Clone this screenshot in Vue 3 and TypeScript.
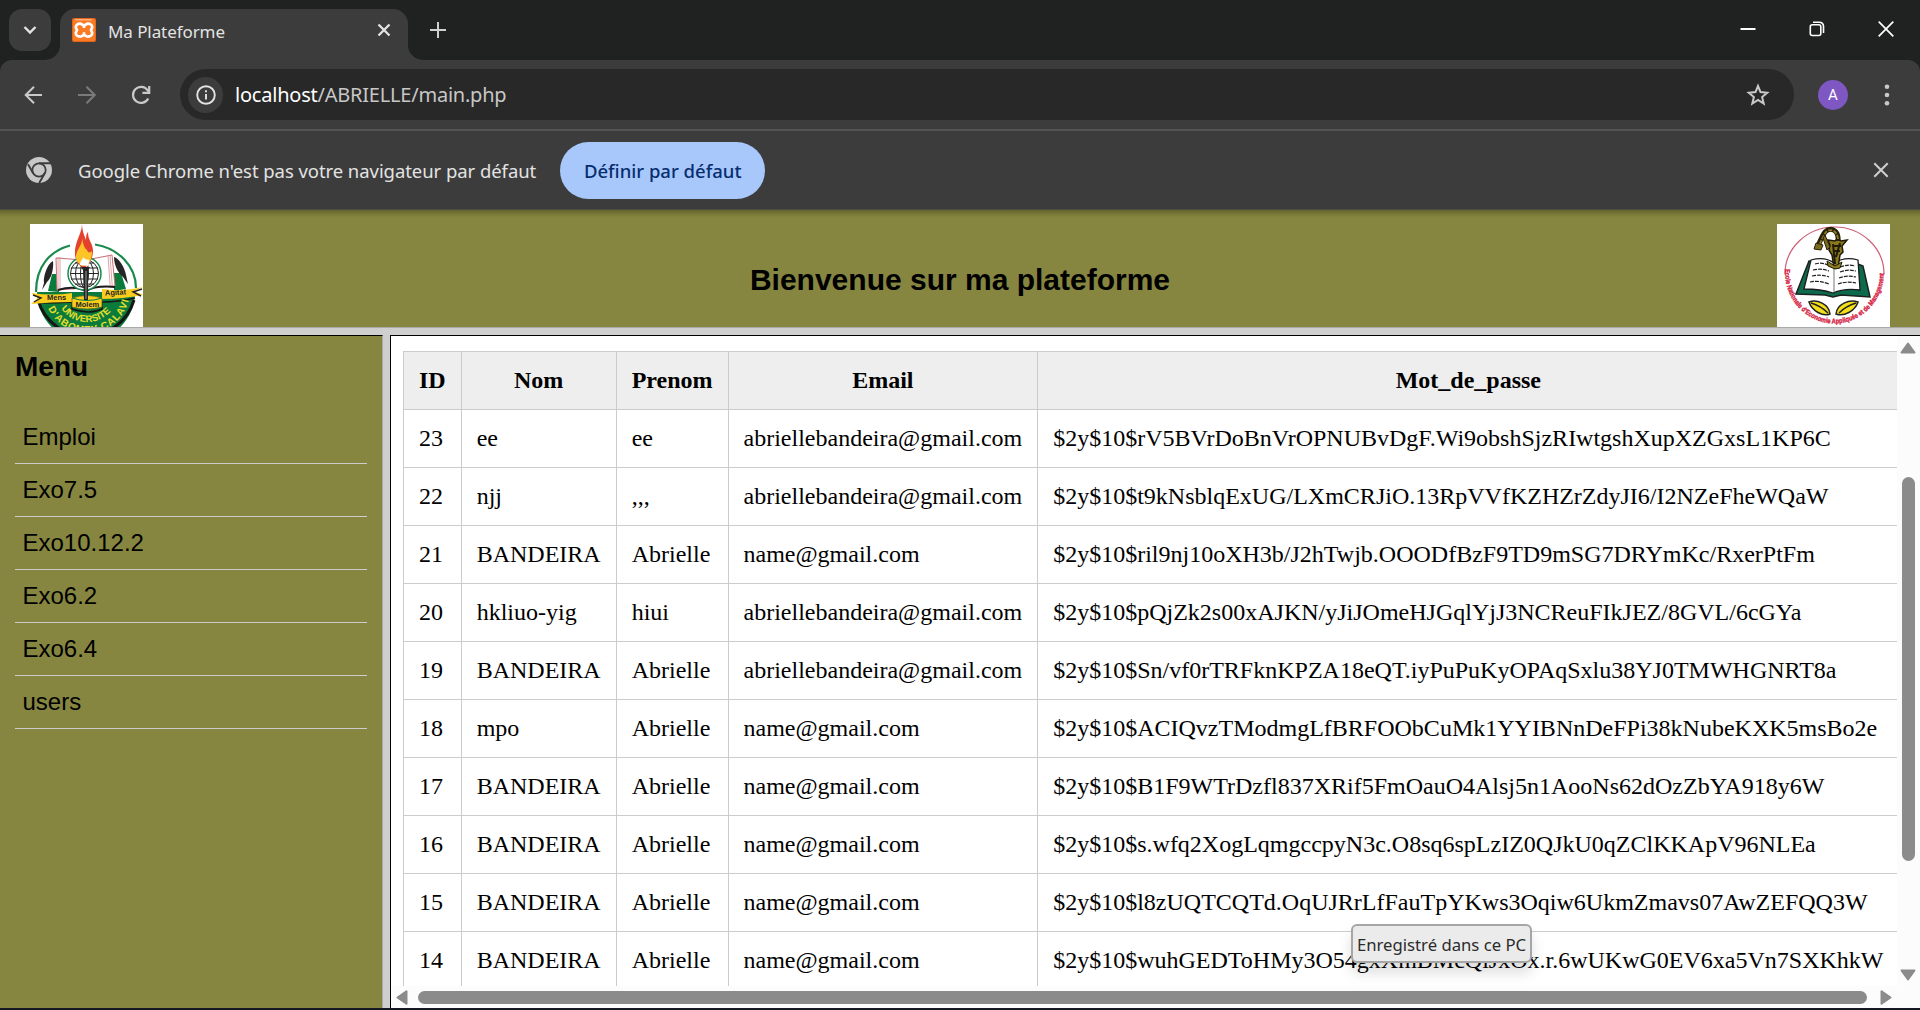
<script setup lang="ts">
interface User {
  id: number
  nom: string
  prenom: string
  email: string
  hash: string
}

const menu: string[] = ['Emploi', 'Exo7.5', 'Exo10.12.2', 'Exo6.2', 'Exo6.4', 'users']

const columns: string[] = ['ID', 'Nom', 'Prenom', 'Email', 'Mot_de_passe']

const users: User[] = [
  { id: 23, nom: 'ee', prenom: 'ee', email: 'abriellebandeira@gmail.com', hash: '$2y$10$rV5BVrDoBnVrOPNUBvDgF.Wi9obshSjzRIwtgshXupXZGxsL1KP6C' },
  { id: 22, nom: 'njj', prenom: ',,,', email: 'abriellebandeira@gmail.com', hash: '$2y$10$t9kNsblqExUG/LXmCRJiO.13RpVVfKZHZrZdyJI6/I2NZeFheWQaW' },
  { id: 21, nom: 'BANDEIRA', prenom: 'Abrielle', email: 'name@gmail.com', hash: '$2y$10$ril9nj10oXH3b/J2hTwjb.OOODfBzF9TD9mSG7DRYmKc/RxerPtFm' },
  { id: 20, nom: 'hkliuo-yig', prenom: 'hiui', email: 'abriellebandeira@gmail.com', hash: '$2y$10$pQjZk2s00xAJKN/yJiJOmeHJGqlYjJ3NCReuFIkJEZ/8GVL/6cGYa' },
  { id: 19, nom: 'BANDEIRA', prenom: 'Abrielle', email: 'abriellebandeira@gmail.com', hash: '$2y$10$Sn/vf0rTRFknKPZA18eQT.iyPuPuKyOPAqSxlu38YJ0TMWHGNRT8a' },
  { id: 18, nom: 'mpo', prenom: 'Abrielle', email: 'name@gmail.com', hash: '$2y$10$ACIQvzTModmgLfBRFOObCuMk1YYIBNnDeFPi38kNubeKXK5msBo2e' },
  { id: 17, nom: 'BANDEIRA', prenom: 'Abrielle', email: 'name@gmail.com', hash: '$2y$10$B1F9WTrDzfl837XRif5FmOauO4Alsj5n1AooNs62dOzZbYA918y6W' },
  { id: 16, nom: 'BANDEIRA', prenom: 'Abrielle', email: 'name@gmail.com', hash: '$2y$10$s.wfq2XogLqmgccpyN3c.O8sq6spLzIZ0QJkU0qZClKKApV96NLEa' },
  { id: 15, nom: 'BANDEIRA', prenom: 'Abrielle', email: 'name@gmail.com', hash: '$2y$10$l8zUQTCQTd.OqUJRrLfFauTpYKws3Oqiw6UkmZmavs07AwZEFQQ3W' },
  { id: 14, nom: 'BANDEIRA', prenom: 'Abrielle', email: 'name@gmail.com', hash: '$2y$10$wuhGEDToHMy3O54gxXmBMcQiJxOx.r.6wUKwG0EV6xa5Vn7SXKhkW' },
]
</script>

<template>
  <div class="window">
    <div class="tabstrip">
      <div class="tab-search">
        <svg width="14" height="10" viewBox="0 0 14 10" fill="none" stroke="#e3e3e3" stroke-width="2.4"><path d="M1.5 2 7 7.5 12.5 2" /></svg>
      </div>
      <div class="tab">
        <svg class="favicon" width="24" height="24" viewBox="0 0 24 24">
          <rect width="24" height="24" rx="2" fill="#e8641b" />
          <rect x="1" y="1" width="22" height="22" rx="1.5" fill="#fb7a24" />
          <path d="M3 1.8h17" stroke="#ffc9a3" stroke-width="1" />
          <path d="M8 5.700c2 0 2.400 1.500 4 1.500s2-1.500 4-1.500c2.500 0 4.200 1.600 4.200 3.600 0 1.500-1.200 2-1.200 2.700s1.200 1.400 1.200 3c0 2-1.700 3.600-4.200 3.600-2 0-2.400-1.500-4-1.500s-2 1.500-4 1.500c-2.500 0-4.200-1.600-4.200-3.600 0-1.600 1.200-2.300 1.200-3s-1.200-1.200-1.200-2.700c0-2 1.700-3.600 4.200-3.600z" fill="none" stroke="#fff" stroke-width="2.700" />
          <path d="M12 7.500v2.500M12 14.200v2.500" stroke="#fff" stroke-width="2.600" />
        </svg>
        <span class="tab-title">Ma Plateforme</span>
        <svg class="tab-close" width="14" height="14" viewBox="0 0 14 14" stroke="#e3e3e3" stroke-width="2.300"><path d="M1.500 1.500l11 11M12.500 1.500l-11 11" /></svg>
        <svg class="foot foot-left" width="15" height="15" viewBox="0 0 15 15"><path d="M15 0v15H0A15 15 0 0 0 15 0z" fill="#3c3c3c" /></svg>
        <svg class="foot foot-right" width="15" height="15" viewBox="0 0 15 15"><path d="M0 0v15h15A15 15 0 0 1 0 0z" fill="#3c3c3c" /></svg>
      </div>
      <svg class="new-tab" width="16" height="16" viewBox="0 0 16 16" stroke="#d0d0d0" stroke-width="2"><path d="M8 0v16M0 8h16" /></svg>
      <div class="controls">
        <svg width="16" height="16" viewBox="0 0 16 16"><path d="M.500 8h15" stroke="#fff" stroke-width="2" /></svg>
        <svg width="16" height="16" viewBox="0 0 16 16" fill="none" stroke="#fff" stroke-width="1.600"><rect x="1.300" y="3.800" width="10.500" height="10.700" rx="2" /><path d="M4 1.200h6.500a4 4 0 0 1 4 4v6.800" /></svg>
        <svg width="16" height="16" viewBox="0 0 16 16" stroke="#fff" stroke-width="1.700"><path d="M.700.700l14.600 14.600M15.300.700.700 15.300" /></svg>
      </div>
    </div>

    <div class="toolbar">
      <svg class="back" width="20" height="20" viewBox="0 0 20 20" fill="none" stroke="#c9c9c9" stroke-width="2"><path d="M18 10H1.500M10 1.700 1.700 10l8.300 8.300" /></svg>
      <svg class="forward" width="20" height="20" viewBox="0 0 20 20" fill="none" stroke="#7b7b7b" stroke-width="2"><path d="M1 10h16.500M9.500 1.700 17.800 10l-8.300 8.300" /></svg>
      <svg class="reload" width="20" height="20" viewBox="0 0 20 20" fill="none" stroke="#c9c9c9" stroke-width="2.200"><path d="M17.200 13.400A8 8 0 1 1 16.500 5.200L18 7" /><path d="M18.200 1v6.800h-6.800" /></svg>
      <div class="omnibox">
        <span class="site-info">
          <svg width="20" height="20" viewBox="0 0 20 20" fill="none" stroke="#e3e3e3"><circle cx="10" cy="10" r="8.800" stroke-width="1.900" /><path d="M10 9v5.500M10 5.300v2" stroke-width="1.900" /></svg>
        </span>
        <span class="url"><b>localhost</b>/ABRIELLE/main.php</span>
        <svg class="star" width="24" height="24" viewBox="0 0 24 24" fill="none" stroke="#c9c9c9" stroke-width="2"><path d="M12 3l2.500 6.100 6.700.600-5.100 4.300 1.600 6.500-5.700-3.500-5.700 3.500 1.600-6.500-5.100-4.300 6.700-.600z" /></svg>
      </div>
      <span class="avatar">A</span>
      <svg class="kebab" width="6" height="24" viewBox="0 0 6 24" fill="#c9c9c9"><circle cx="3" cy="3.700" r="2.300" /><circle cx="3" cy="12" r="2.300" /><circle cx="3" cy="20.300" r="2.300" /></svg>
    </div>

    <div class="infobar">
      <svg class="chrome" width="26" height="26" viewBox="0 0 26 26">
        <circle cx="13" cy="13" r="13" fill="#c7c7c7" />
        <g stroke="#3c3c3c" stroke-width="1.900" fill="none"><circle cx="13" cy="13" r="6.700" stroke-width="1.800" /><path d="M13 6.300h13M7.200 16.300 2 7.200M18.800 16.300 13.200 26" /></g>
      </svg>
      <span class="info-text">Google Chrome n'est pas votre navigateur par défaut</span>
      <button class="default-btn"><span>Définir par défaut</span></button>
      <svg class="info-close" width="16" height="16" viewBox="0 0 16 16" stroke="#d0d0d0" stroke-width="2"><path d="M1.300 1.300l13.400 13.400M14.700 1.300 1.300 14.700" /></svg>
    </div>

    <header class="banner">
      <svg class="logo" width="113" height="103" viewBox="0 0 113 103">
        <defs>
          <path id="arcInner" d="M25 66a32 32 0 0 0 64 0" />
          <path id="arcOuter" d="M14 66a43 43 0 0 0 86 0" />
        </defs>
        <rect width="113" height="113" fill="#fff" />
        <path d="M7 68a49 49 0 0 0 98 0z" fill="#0b7b3c" />
        <path d="M8 76a50 50 0 0 0 96 0" fill="none" stroke="#161616" stroke-width="3" />
        <path d="M6 68C6 42 20 27 40 21.500M65 20.500C88 24 106 42 106 64" fill="none" stroke="#1b8a4e" stroke-width="2.200" />
        <path d="M18 67l4-17h7v18zM84 49h7l5 16-12 2z" fill="#0b7b3c" />
        <path d="M23 37c-6 3-10 16-9 22l-2 7 5-8c4-3 7-13 6-21zM84 33c5 1 11 11 12 18l2 9-5-7c-5-4-9-12-9-20z" fill="#252525" />
        <path d="M26 34l28 2v28l-27 2zM82 31l-26 5v28l29-2z" fill="#fff" stroke="#c76d73" stroke-width="1" />
        <path d="M28 33v32M30 33v32M80 31.500l2.300 31M78 32l2.300 31" stroke="#d58b90" stroke-width=".800" />
        <path d="M28 66c10-3 20-3 28 1 8-5 18-5 29-4" stroke="#1c1c1c" stroke-width="2" fill="none" />
        <circle cx="54.500" cy="49.500" r="16.500" fill="#fff" stroke="#1b8a4e" stroke-width="1.500" />
        <g fill="none" stroke="#222" stroke-width="1"><circle cx="54.500" cy="49.500" r="14" /><ellipse cx="54.500" cy="49.500" rx="9" ry="14" /><ellipse cx="54.500" cy="49.500" rx="4" ry="14" /><path d="M41 44h27M40.500 49.500h28M41 55h27M45 39h19M45 60h19" /></g>
        <path d="M52 0c0 10-8 18-7 31 1 6 4 10 7 12h4c4-4 7-9 7-16 0-8-5-10-5-19-2 2-2 5-2 8C54 11 52 6 52 0z" fill="#e5412f" />
        <path d="M52 14c1 7-6 12-6 19 0 5 4 7 6 9l5-1c4-3 5-8 5-14-1 1-4 3-5-1-3-2-4-7-5-12z" fill="#fcc427" />
        <path d="M50 41c0-4 2-5 4-8 0 3 3 2 5 3 1 2-1 4-1 6z" fill="#fff" />
        <path d="M9 79q17 0 33 -1v7q18 6 30 0v-7q17 0 33-4" fill="none" stroke="#161616" stroke-width="1.500" />
        <path d="M1 69q22 3 41 0v9q-20 0-41 2l7-6zM113 63q-20 5-41 2v10q20 0 41-4l-9-4z" fill="#f8cd1e" />
        <path d="M3 71l8 3-7 4M112 65l-9 3 8 4" stroke="#222" stroke-width="1.400" fill="none" />
        <path d="M42 74q15-5 30 0v9q-15 4-30 0z" fill="#f8cd1e" stroke="#5d6a1e" stroke-width=".800" />
        <path d="M42 74q15 5 30 0" fill="none" stroke="#0b7b3c" />
        <path d="M51 43h9l-2 3v30h-4l-1-30z" fill="#242424" />
        <path d="M56 47v28" stroke="#999" stroke-width="1" />
        <g class="ribbon-text"><text x="17" y="75.500">Mens</text><text x="45.500" y="83">Molem</text><text x="75" y="71.500" transform="rotate(-3 76 71)">Agitat</text></g>
        <g class="seal-text"><text><textPath href="#arcInner" startOffset="20">UNIVERSITE</textPath></text><text class="outer"><textPath href="#arcOuter" startOffset="19">D'ABOMEY-CALAVI</textPath></text></g>
      </svg>

      <h1>Bienvenue sur ma plateforme</h1>

      <svg class="logo" width="113" height="103" viewBox="0 0 113 103">
        <defs><path id="arcSchool" d="M8 44v4a49.500 51.500 0 0 0 99 0v-4" /></defs>
        <rect width="113" height="113" fill="#fff" />
        <path d="M8 50a49.500 47 0 0 1 99 0" fill="none" stroke="#cd5e75" stroke-width="1.200" />
        <text class="school-text" textLength="160" lengthAdjust="spacingAndGlyphs"><textPath href="#arcSchool" startOffset="1">Ecole Nationale d'Economie Appliquée et de Management</textPath></text>
        <path d="M32 37 19 70l29 1 8 2 8-2 29 2-7-31-5-2z" fill="#0e6a4c" stroke="#1b2220" stroke-width="1.500" />
        <path d="M34 36q14-4 23 3 11-7 24-3l2 30q-16-2-27 3-12-4-29-4z" fill="#fff" stroke="#1c1c1c" stroke-width="1.300" />
        <path d="M57 39v29" stroke="#777" />
        <g fill="none" stroke="#222" stroke-width="1.200" stroke-dasharray="4 1"><path d="M38 40q7-2 13 1M36 46q8-2 16 1M35 52q9-2 17 1M33 58q9-2 19 2M63 43q8-3 15-1M63 48q8-3 16-1M62 54q8-3 17-1M61 60q8-3 18-1" /></g>
        <path d="M51 16l7 1 3-3 3 3 6-1-5 6 1 6-3 3-2 13h-4l-2-13-3-5 1-5z" fill="#8b7a1c" stroke="#1f1b08" stroke-width="1.500" />
        <path d="M61 17C62 5 53 3 48 8q-3 4-7 14" fill="none" stroke="#27210a" stroke-width="5" />
        <path d="M61 15C60 6 53 4 49 8q-3 4-7 14" fill="none" stroke="#8f7c24" stroke-width="1.800" stroke-dasharray="4 1.500" />
        <path d="M39 19l7 2-2 5-7-1zM48 11l5 12-3 3-4-12z" fill="#7b6b1c" stroke="#27210a" stroke-width="1" />
        <path d="M56 20l2 20M63 19l-4 14M57 22h7M57 27h6" stroke="#1f1b08" stroke-width="2" />
        <path d="M50 37l8 5 7-4-2 6-5 1-7-3z" fill="#8d7b20" stroke="#1f1b08" stroke-width="1" />
        <g fill="#f4df1b" stroke="#222" stroke-width="1.500"><path d="M32 78c8-3 20 2 21 12-7 3-18-3-21-12zM81 78c-9-3-21 2-22 12 8 3 19-3 22-12z" /><path d="M34 79q10 3 17 10M79 79q-10 3-17 10" fill="none" /></g>
      </svg>
    </header>

    <div class="frames">
      <nav class="sidebar">
        <h2>Menu</h2>
        <ul>
          <li v-for="item in menu" :key="item">{{ item }}</li>
        </ul>
      </nav>
      <main class="content">
        <div class="view">
          <div class="page">
            <table>
              <thead>
                <tr><th v-for="c in columns" :key="c">{{ c }}</th></tr>
              </thead>
              <tbody>
                <tr v-for="u in users" :key="u.id">
                  <td>{{ u.id }}</td>
                  <td>{{ u.nom }}</td>
                  <td>{{ u.prenom }}</td>
                  <td>{{ u.email }}</td>
                  <td>{{ u.hash }}</td>
                </tr>
              </tbody>
            </table>
          </div>
          <div class="vbar">
            <svg width="16" height="12" viewBox="0 0 16 12"><path d="M8 1.500 14.500 10.500h-13z" fill="#8b8b8b" stroke="#8b8b8b" stroke-width="2" stroke-linejoin="round" /></svg>
            <div class="vthumb"></div>
            <svg width="16" height="12" viewBox="0 0 16 12"><path d="M8 10.500 14.500 1.500h-13z" fill="#8b8b8b" stroke="#8b8b8b" stroke-width="2" stroke-linejoin="round" /></svg>
          </div>
        </div>
        <div class="hbar">
          <svg width="12" height="15" viewBox="0 0 12 15"><path d="M1.500 7.500 10.500 1.300v12.400z" fill="#8b8b8b" stroke="#8b8b8b" stroke-width="2" stroke-linejoin="round" /></svg>
          <div class="hthumb"></div>
          <svg width="12" height="15" viewBox="0 0 12 15"><path d="M10.500 7.500 1.500 1.300v12.400z" fill="#8b8b8b" stroke="#8b8b8b" stroke-width="2" stroke-linejoin="round" /></svg>
        </div>
      </main>
    </div>
    <div class="bottom-edge"></div>
    <div class="tooltip">Enregistré dans ce PC</div>
  </div>
</template>

<style scoped>
* {
  box-sizing: border-box;
}
.window {
  position: relative;
  display: flex;
  flex-direction: column;
  width: 1920px;
  height: 1010px;
  overflow: hidden;
  background: #202221;
  font-family: 'Noto Sans', 'Open Sans', sans-serif;
}
svg {
  display: block;
  flex: none;
}

.tabstrip {
  display: flex;
  height: 60px;
  padding-left: 9px;
}
.tab-search {
  display: flex;
  align-items: center;
  justify-content: center;
  width: 42px;
  height: 42px;
  margin-top: 9px;
  border-radius: 13px;
  background: #3c3c3c;
}
.tab {
  position: relative;
  display: flex;
  align-items: center;
  width: 348px;
  height: 51px;
  margin: 9px 0 0 9px;
  padding: 0 17px 9px 12px;
  border-radius: 15px 15px 0 0;
  background: #3c3c3c;
}
.tab-title {
  flex: 1;
  margin-left: 12px;
  padding-top: 3px;
  color: #e3e3e3;
  font-size: 17px;
  letter-spacing: -0.08px;
  line-height: 24px;
  white-space: nowrap;
}
.foot {
  position: absolute;
  bottom: 0;
}
.foot-left {
  left: -15px;
}
.foot-right {
  right: -15px;
}
.new-tab {
  margin: 22px 0 0 22px;
}
.controls {
  display: flex;
  gap: 53px;
  margin: 21px 26px 0 auto;
}

.toolbar {
  display: flex;
  align-items: center;
  height: 69px;
  padding: 0 30px 0 24px;
  border-radius: 12px 12px 0 0;
  background: #3c3c3c;
}
.forward {
  margin-left: 33px;
}
.reload {
  margin-left: 34px;
}
.omnibox {
  display: flex;
  align-items: center;
  width: 1614px;
  height: 51px;
  margin-left: 29px;
  padding: 0 24px 0 8px;
  border-radius: 26px;
  background: #282828;
}
.site-info {
  display: flex;
  align-items: center;
  justify-content: center;
  width: 35px;
  height: 36px;
  border-radius: 18px;
  background: #3c3c3c;
}
.url {
  flex: 1;
  margin-left: 12px;
  color: #c7c7c7;
  font-size: 20px;
  letter-spacing: -0.22px;
  white-space: nowrap;
}
.url b {
  color: #fff;
  font-weight: 400;
}
.avatar {
  width: 30px;
  height: 30px;
  margin-left: 24px;
  border-radius: 50%;
  background: #7e57c2;
  color: #fff;
  font: 15px/31px Roboto, sans-serif;
  text-align: center;
}
.kebab {
  margin-left: auto;
}

.infobar {
  display: flex;
  align-items: center;
  height: 81px;
  padding: 0 31px 0 26px;
  border-top: 2px solid #545454;
  border-bottom: 1px solid #4b4b42;
  background: #3c3c3c;
}
.info-text {
  margin-left: 26px;
  padding-top: 1px;
  color: #e3e3e3;
  font-size: 18.500px;
  letter-spacing: -0.06px;
  white-space: nowrap;
}
.default-btn {
  width: 205px;
  height: 57px;
  margin-left: 24px;
  padding: 0;
  border: 0;
  border-radius: 29px;
  background: #a8c7fa;
  color: #062e6f;
  font: 500 18.500px 'Noto Sans', sans-serif;
  white-space: nowrap;
}
.info-close {
  margin-left: auto;
}

.banner {
  display: flex;
  align-items: flex-start;
  justify-content: space-between;
  height: 117px;
  padding: 14px 30px 0;
  overflow: hidden;
  background: linear-gradient(#65652f, #868640 7px);
}
.ribbon-text {
  font: bold 7.500px 'Liberation Sans', sans-serif;
  fill: #222;
}
.seal-text {
  font: bold 9.500px 'Liberation Sans', sans-serif;
  fill: #e7e02c;
}
.outer {
  font-size: 10px;
  letter-spacing: 0.9px;
}
.school-text {
  font: bold 7px 'Liberation Sans', sans-serif;
  fill: #d51e46;
  stroke: #d51e46;
  stroke-width: 0.35px;
}
h1 {
  margin: 38px 0 0;
  color: #000;
  font: bold 30px/36px 'Liberation Sans', sans-serif;
}

.frames {
  display: flex;
  height: 681px;
  border-top: 1px solid #a9a9a9;
  background: #cfcfcf;
}
.sidebar {
  flex: none;
  width: 383px;
  margin-top: 7px;
  padding: 15px 15px 0;
  border-right: 1px solid #a9a9a9;
  border-top: 1px solid #000;
  background: #868640;
  color: #000;
  font-family: 'Liberation Sans', sans-serif;
}
h2 {
  margin: 0 0 28px;
  font-size: 28px;
  line-height: 32px;
}
ul {
  margin: 0;
  padding: 0;
  list-style: none;
}
li {
  height: 53px;
  padding: 12px 7.500px;
  border-bottom: 1px solid #ccc;
  font-size: 24px;
  line-height: 28px;
}
.content {
  display: flex;
  flex: 1;
  flex-direction: column;
  min-width: 0;
  margin: 7px 0 0 7px;
  border: solid #000;
  border-width: 1px 0 0 1px;
  background: #fff;
}
.view {
  display: flex;
  height: 650px;
}
.page {
  flex: none;
  width: 1506px;
  padding: 15px 0 0 12px;
  overflow: hidden;
}
table {
  border-collapse: collapse;
  color: #000;
  font: 24px/27px 'Liberation Serif', 'Times New Roman', serif;
  white-space: nowrap;
}
th,
td {
  padding: 15px;
  border: 1px solid #ccc;
  text-align: left;
}
th {
  background: #eee;
  text-align: center;
}
.vbar {
  display: flex;
  flex: 1;
  flex-direction: column;
  align-items: center;
  padding: 6px 1px 5px 0;
  background: #fcfcfc;
}
.vthumb {
  width: 13px;
  height: 384px;
  margin: 123px 0 auto;
  border-radius: 7px;
  background: #8b8b8b;
}
.hbar {
  display: flex;
  align-items: center;
  height: 22px;
  padding: 1px 28px 0 5px;
  background: #fcfcfc;
}
.hthumb {
  width: 1449px;
  height: 13px;
  margin: 0 13px 0 10px;
  border-radius: 7px;
  background: #8b8b8b;
}
.bottom-edge {
  height: 2px;
  background: #171722;
}
.tooltip {
  position: absolute;
  left: 1351px;
  top: 924px;
  width: 181px;
  height: 39px;
  border: 2px solid #a6a6a6;
  border-radius: 6px;
  background: #ebebeb;
  box-shadow: 0 10px 14px rgba(0, 0, 0, 0.13);
  color: #2b2b2b;
  font-size: 16.700px;
  line-height: 37px;
  text-align: center;
  white-space: nowrap;
}
</style>

<style>
body {
  margin: 0;
  overflow: hidden;
}
</style>
